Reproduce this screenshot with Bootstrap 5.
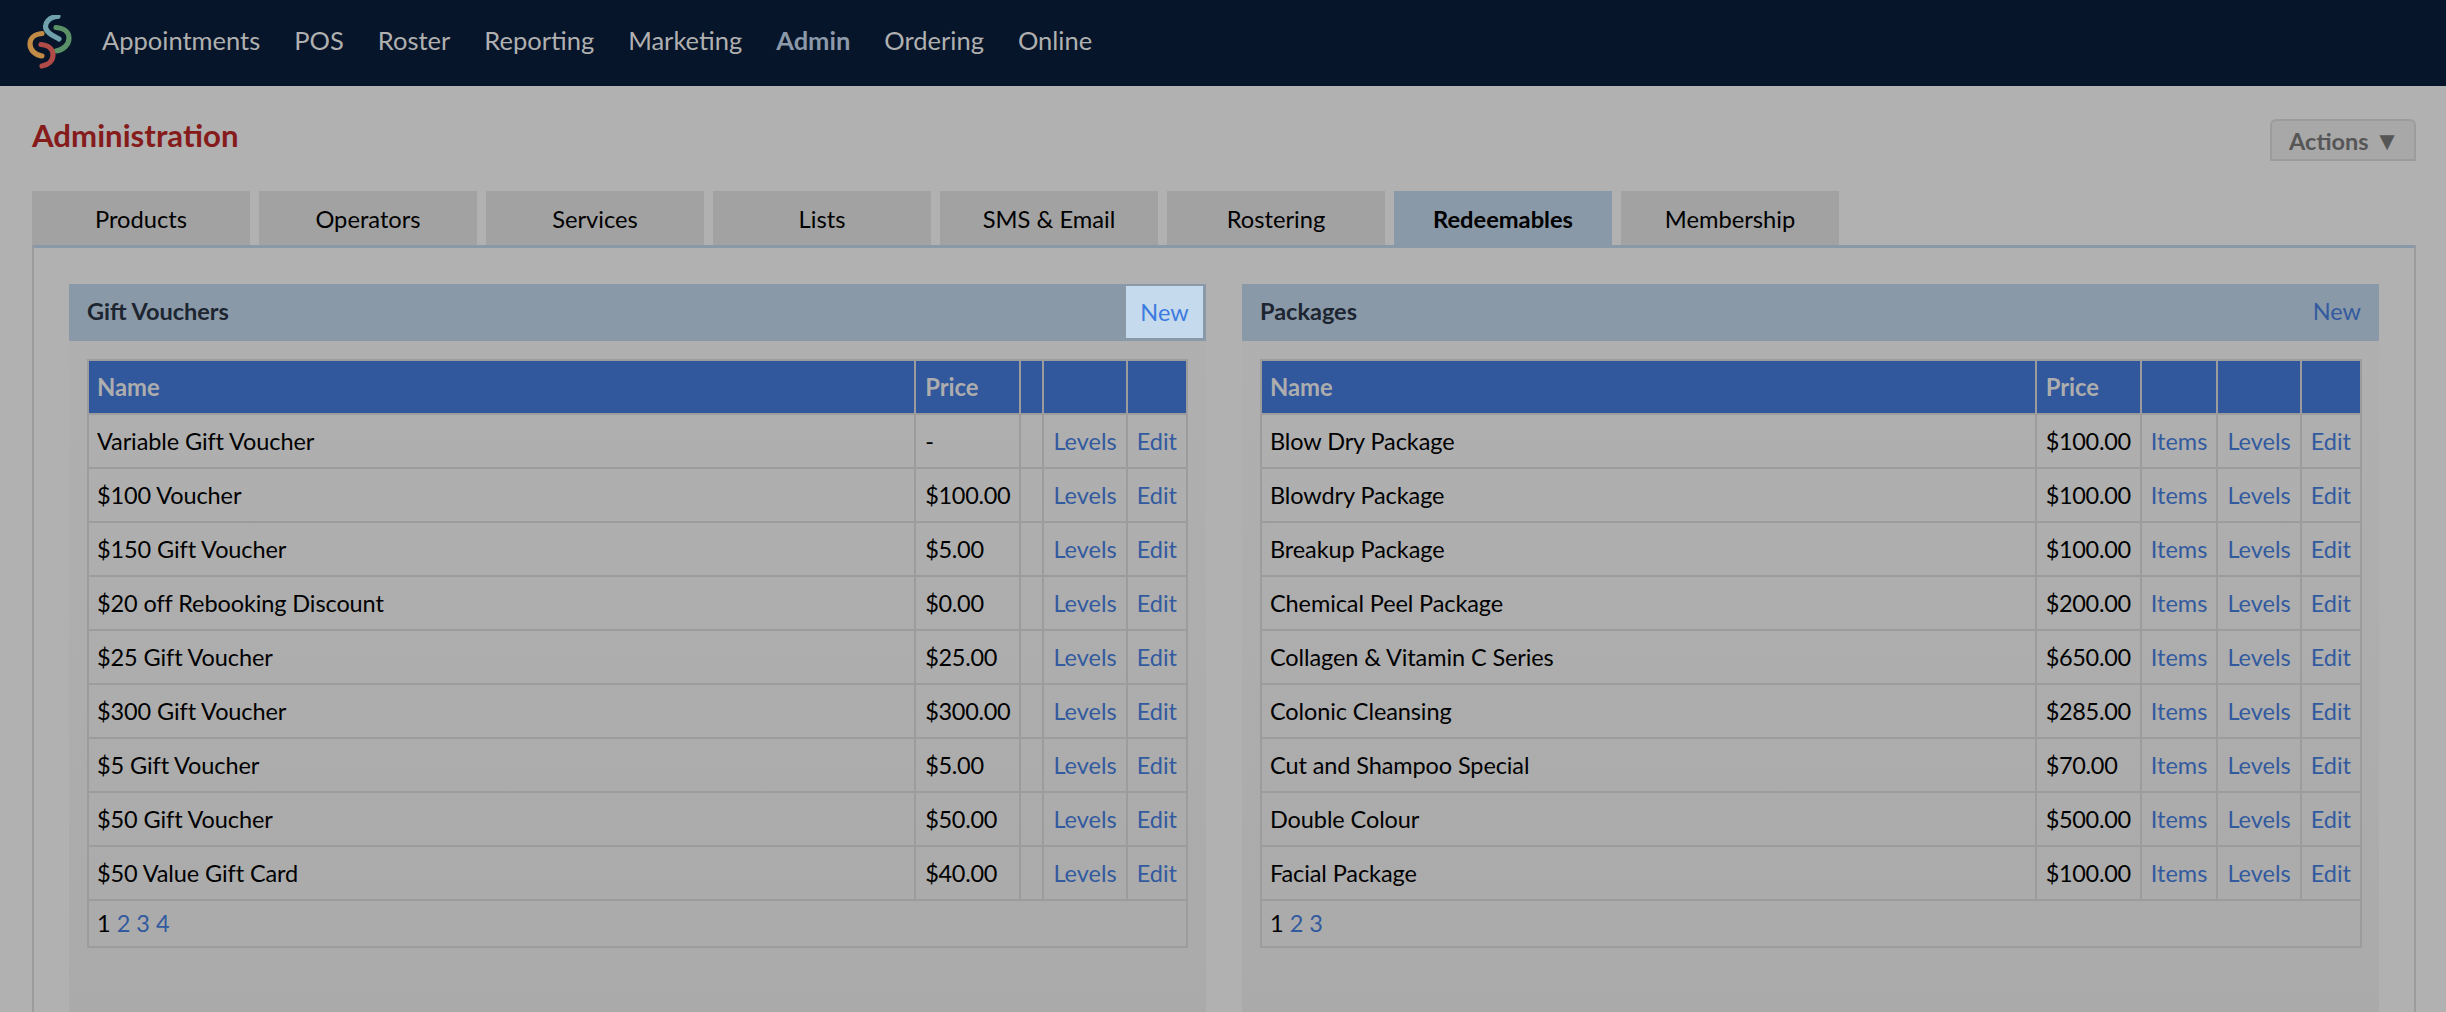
<!DOCTYPE html>
<html lang="en"><head><meta charset="utf-8"><title>Administration</title>
<link href="https://cdn.jsdelivr.net/npm/bootstrap@5.3.0/dist/css/bootstrap.min.css" rel="stylesheet">
<style>
html,body{height:100%}
body{background:#b1b1b1;font-family:Lato,"Liberation Sans",sans-serif;font-size:24px;color:#000;overflow:hidden}
.topbar{background:#061529;height:86px;padding:0 27px}
.toplinks{gap:34px;margin-left:29px;margin-bottom:6px}
.toplinks a{color:#b0b0b0;font-size:25.500px;text-decoration:none}
.toplinks a.on{color:#8b99a8;font-weight:700}
.headrow{padding:30px 30px 0 32px;height:105px}
.pagetitle{color:#861b1b;font-size:31.2px;font-weight:700;margin:0;line-height:1;padding-top:4px}
.actbtn{background:#a8a8a8;color:#565656;border:2px solid #9c9c9c;border-radius:6px 6px 0 0;font-weight:700;font-size:23.500px;height:42px;width:146px;line-height:1;padding:2px 0 0 3px;margin-top:3px}
.arrowmark{font-size:1.1em}
.tabstrip{margin:0 0 0 32px;gap:9px;height:54px}
.tabstrip a{width:218px;background:#a2a2a2;color:#000;text-decoration:none;font-size:23.700px;padding-top:4px}
.tabstrip a.on{background:#8a99a8;font-weight:700}
.tabbody{margin:0 30px 0 32px;border-left:2px solid #9c9c9c;border-right:2px solid #9c9c9c;border-top:3px solid #8a99a8;padding:36px 35px 0 35px;gap:36px;height:800px}
.sect{flex:1 1 0;background:linear-gradient(#b0b0b0,#aaa);min-width:0;height:100%}
.secthead{background:#8a99a8;height:57px;padding-left:18px;color:#1c2530;font-weight:700;font-size:23.500px}
.secthead span{margin-top:-1px}
.newlink{color:#325a9f;text-decoration:none;font-size:23.500px;font-weight:400;padding:0 18px;height:100%;line-height:55px;display:block}
.newlink.lit{background:#c5daec;color:#3c7be0;padding:0;border:solid #8a99a8;border-width:2px 3px 3px 0;background-clip:padding-box;line-height:52px;width:80px;text-align:center}
.tblwrap{padding:18px 18px 0 18px}
.tblwrap.snug{padding-right:17px}
.tbl{width:100%;margin:0;border-collapse:collapse;font-size:23.5px;color:#000;line-height:1}
.tbl th,.tbl td{border:2px solid #9c9c9c;padding:2px 9px 0;height:54px;vertical-align:middle;background:transparent;white-space:nowrap}
.tbl th{background:#31579d;color:#adadad;font-weight:700;font-size:23.800px}
.tbl td a{color:#325a9f;text-decoration:none}
.tbl .cname{width:100%}
.tbl tr>*:first-child{padding-left:8px}
.tbl td:first-child{letter-spacing:-.1px}
.tbl td:nth-child(2){letter-spacing:-.3px}
.tbl tr>*:nth-child(2){padding:2px 9px 0 9px}
.tbl td.pg{height:47px;padding-bottom:1px;letter-spacing:0}
.tbl .cblank{min-width:23px}
</style></head><body>
<nav class="topbar d-flex align-items-center">
<svg width="46" height="56" viewBox="26 15 46 56" aria-label="logo"><g fill="none" stroke-width="5.200" stroke-linecap="round"><path d="M57 16.500C48 17 43 23 45 29C47 34 53 36 58 39" stroke="#6fa2ad"/><path d="M55 27.500C63 28 68 32 68 38C68 45 62 50 55 51" stroke="#5a9166"/><path d="M41 33.500C34 34 29 38 29 44C29 50 34 55 41 56" stroke="#c18a45"/><path d="M40 44.500C47 45 52 49 52 55C52 61 47 65 41 66" stroke="#b04b48"/></g></svg>
<div class="toplinks d-flex"><a href="#">Appointments</a><a href="#">POS</a><a href="#">Roster</a><a href="#">Reporting</a><a href="#">Marketing</a><a href="#" class="on">Admin</a><a href="#">Ordering</a><a href="#">Online</a></div>
</nav>
<div class="headrow d-flex justify-content-between align-items-start"><h1 class="pagetitle">Administration</h1><button class="actbtn">Actions <span class="arrowmark">▼</span></button></div>
<div class="tabstrip d-flex"><a href="#" class="d-flex align-items-center justify-content-center">Products</a><a href="#" class="d-flex align-items-center justify-content-center">Operators</a><a href="#" class="d-flex align-items-center justify-content-center">Services</a><a href="#" class="d-flex align-items-center justify-content-center">Lists</a><a href="#" class="d-flex align-items-center justify-content-center">SMS &amp; Email</a><a href="#" class="d-flex align-items-center justify-content-center">Rostering</a><a href="#" class="on d-flex align-items-center justify-content-center">Redeemables</a><a href="#" class="d-flex align-items-center justify-content-center">Membership</a></div>
<div class="tabbody d-flex">
<section class="sect">
<div class="secthead d-flex justify-content-between align-items-center"><span>Gift Vouchers</span><a href="#" class="newlink lit">New</a></div>
<div class="tblwrap"><table class="tbl"><thead><tr><th class="cname">Name</th><th>Price</th><th class="cblank"></th><th></th><th></th></tr></thead><tbody id="gv"></tbody></table></div>
</section>
<section class="sect">
<div class="secthead d-flex justify-content-between align-items-center"><span>Packages</span><a href="#" class="newlink">New</a></div>
<div class="tblwrap snug"><table class="tbl"><thead><tr><th class="cname">Name</th><th>Price</th><th></th><th></th><th></th></tr></thead><tbody id="pk"></tbody></table></div>
</section>
</div>
<script>
const A=[["Variable Gift Voucher","-"],["$100 Voucher","$100.00"],["$150 Gift Voucher","$5.00"],["$20 off Rebooking Discount","$0.00"],["$25 Gift Voucher","$25.00"],["$300 Gift Voucher","$300.00"],["$5 Gift Voucher","$5.00"],["$50 Gift Voucher","$50.00"],["$50 Value Gift Card","$40.00"]];
const B=[["Blow Dry Package","$100.00"],["Blowdry Package","$100.00"],["Breakup Package","$100.00"],["Chemical Peel Package","$200.00"],["Collagen &amp; Vitamin C Series","$650.00"],["Colonic Cleansing","$285.00"],["Cut and Shampoo Special","$70.00"],["Double Colour","$500.00"],["Facial Package","$100.00"]];
const L=t=>`<a href="#">${t}</a>`;
document.getElementById('gv').innerHTML=A.map(r=>`<tr><td>${r[0]}</td><td>${r[1]}</td><td></td><td>${L('Levels')}</td><td>${L('Edit')}</td></tr>`).join('')+`<tr><td colspan="5" class="pg">1 ${L(2)} ${L(3)} ${L(4)}</td></tr>`;
document.getElementById('pk').innerHTML=B.map(r=>`<tr><td>${r[0]}</td><td>${r[1]}</td><td>${L('Items')}</td><td>${L('Levels')}</td><td>${L('Edit')}</td></tr>`).join('')+`<tr><td colspan="5" class="pg">1 ${L(2)} ${L(3)}</td></tr>`;
</script>
<script src="https://cdn.jsdelivr.net/npm/bootstrap@5.3.0/dist/js/bootstrap.bundle.min.js"></script>
</body></html>
